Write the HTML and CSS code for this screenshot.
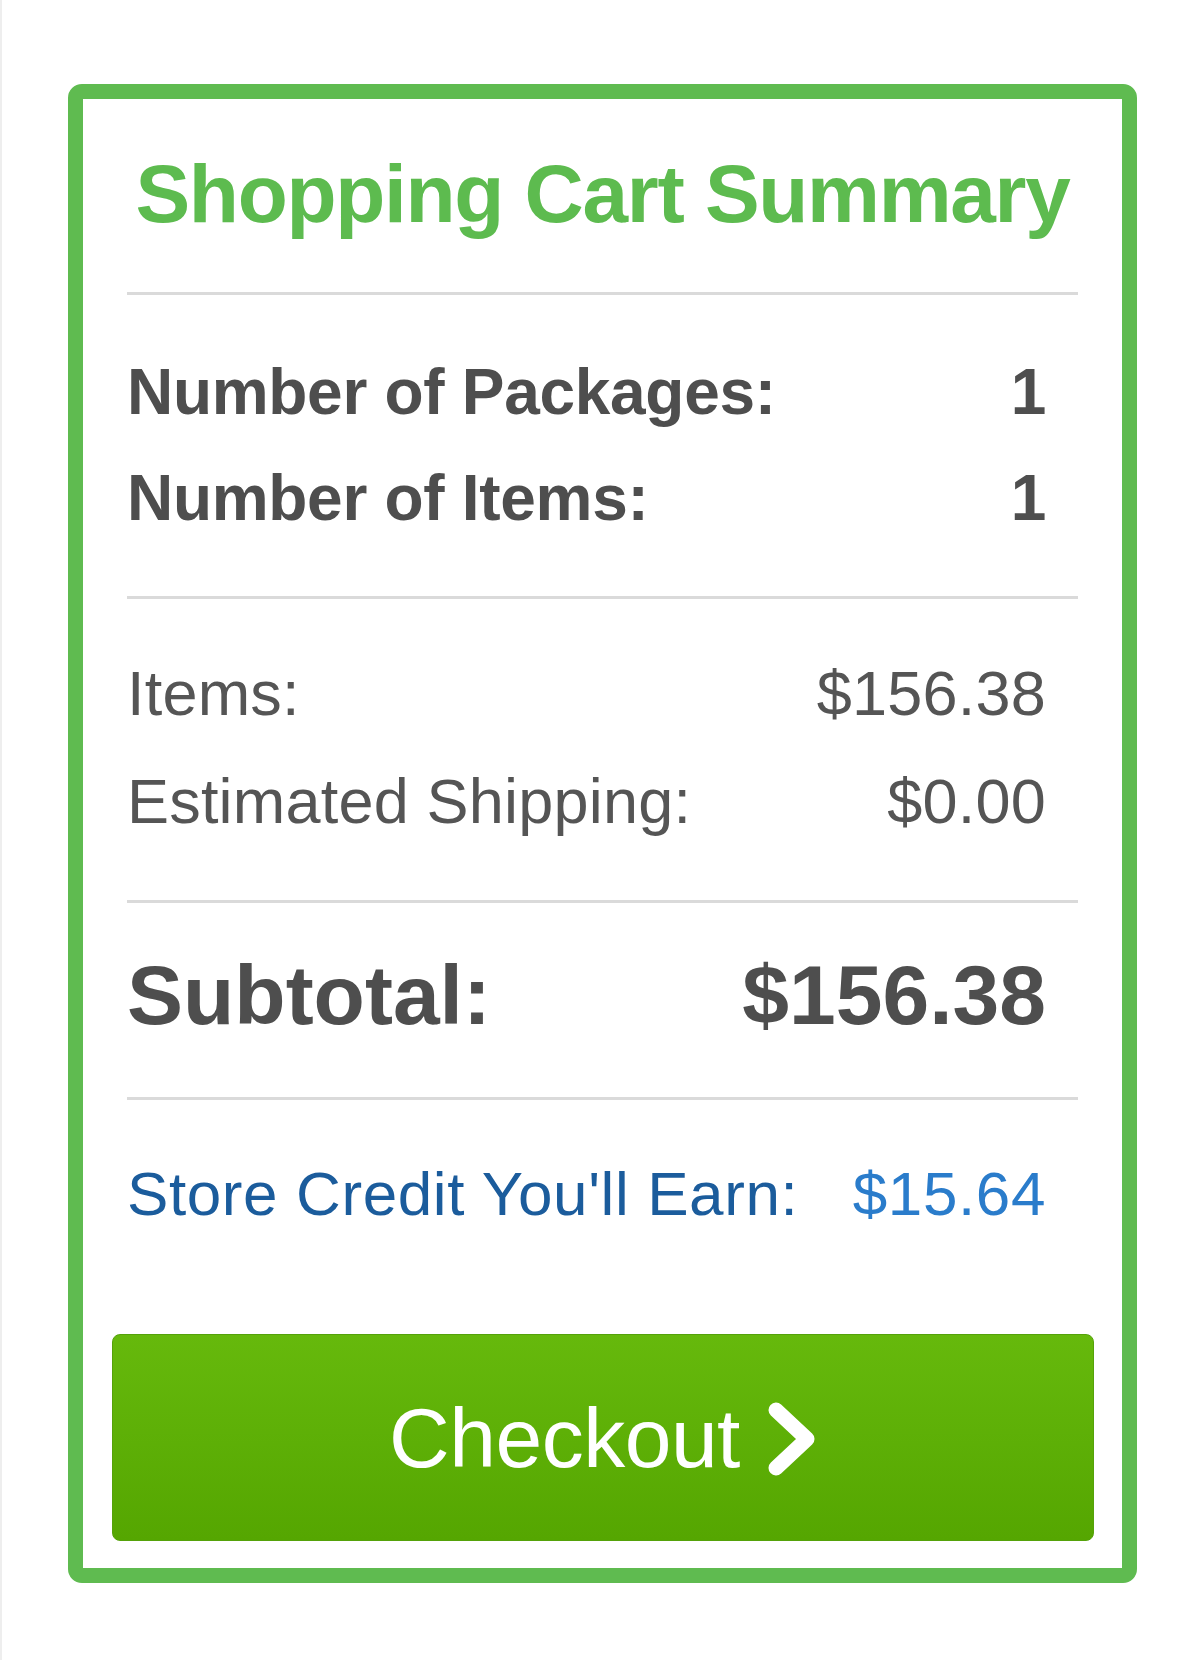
FILE: index.html
```html
<html>
    <head>
        <title>Shopping Cart Summary</title>
        <link rel="stylesheet" href="styles.css">
    </head>
    <body>
        <div id="page">
            <div id="cart_summary">
                <h1 class="summary_title">Shopping Cart Summary</h1>
                <div class="divider"></div>
                <div class="summary_block counts">
                    <div class="summary_row">
                        <span>Number of Packages:</span>
                        <span>1</span>
                    </div>
                    <div class="summary_row">
                        <span>Number of Items:</span>
                        <span>1</span>
                    </div>
                </div>
                <div class="divider"></div>
                <div class="summary_block costs">
                    <div class="summary_row">
                        <span>Items:</span>
                        <span>$156.38</span>
                    </div>
                    <div class="summary_row">
                        <span>Estimated Shipping:</span>
                        <span>$0.00</span>
                    </div>
                </div>
                <div class="divider"></div>
                <div class="summary_block subtotal">
                    <div class="summary_row">
                        <span>Subtotal:</span>
                        <span>$156.38</span>
                    </div>
                </div>
                <div class="divider"></div>
                <div class="summary_block credit">
                    <div class="summary_row">
                        <span class="credit_label">Store Credit You'll Earn:</span>
                        <span class="credit_value">$15.64</span>
                    </div>
                </div>
                <button class="checkout_button" type="button">
                    <span>Checkout</span>
                    <svg class="chevron" width="50" height="76" viewBox="0 0 50 76">
                        <polyline points="9,9 40,38 9,67" fill="none" stroke="#ffffff" stroke-width="15" stroke-linecap="round" stroke-linejoin="round"/>
                    </svg>
                </button>
            </div>
        </div>
    </body>
</html>
```

FILE: styles.css
```css
body {

    margin: 0px;
    padding: 0px;
    background: #ffffff;
    font-family: "Liberation Sans", Arial, sans-serif;
}

div#page {

    min-height: 1660px;
    box-sizing: border-box;

    border-left: 2px solid #eeeeee;
    padding-top: 84px;
    padding-left: 66px;
}

div#cart_summary {

    width: 1069px;
    box-sizing: border-box;

    border: 15px solid #5fbb50;
    border-radius: 14px;

    padding: 0 44px 27px 44px;
    background: #ffffff;
}

h1.summary_title {

    margin: 0 0 52px 0;
    padding-top: 49px;

    font-size: 82px;
    line-height: 92px;
    font-weight: bold;
    letter-spacing: -1.3px;
    text-align: center;
    color: #5dbb4f;
}

div.divider {

    height: 3px;
    background: #dadada;
}

div.summary_row {

    display: flex;
    justify-content: space-between;
    padding-right: 32px;
}

div.counts {

    display: flex;
    flex-direction: column;
    gap: 34px;
    padding: 61px 0 62px 0;

    font-size: 64px;
    line-height: 72px;
    font-weight: bold;
    letter-spacing: -0.3px;
    color: #4e4e4e;
}

div.costs {

    display: flex;
    flex-direction: column;
    gap: 36px;
    padding: 58px 0 63px 0;

    font-size: 63px;
    line-height: 72px;
    letter-spacing: 0.2px;
    color: #555555;
}

div.subtotal {

    padding: 44px 0 54px 0;

    font-size: 84px;
    line-height: 96px;
    font-weight: bold;
    letter-spacing: 0px;
    color: #4e4e4e;
}

div.credit {

    padding: 58px 0 104px 0;

    font-size: 62px;
    line-height: 72px;
    letter-spacing: 0.6px;
}

span.credit_label {

    color: #1b5c9c;
}

span.credit_value {

    color: #2a7ccb;
}

button.checkout_button {

    display: flex;
    align-items: center;
    justify-content: center;
    gap: 27px;

    width: calc(100% + 31px);
    height: 207px;
    margin: 0 -16px 0 -15px;

    border: 1px solid #55a20a;
    border-radius: 8px;

    background: linear-gradient(to bottom, #66b90c, #55a601);

    font-family: "Liberation Sans", Arial, sans-serif;
    font-size: 84px;
    line-height: 84px;
    letter-spacing: -0.5px;
    color: #ffffff;
    padding: 0;
}

svg.chevron {

    display: block;
    margin-top: 2px;
}
```
